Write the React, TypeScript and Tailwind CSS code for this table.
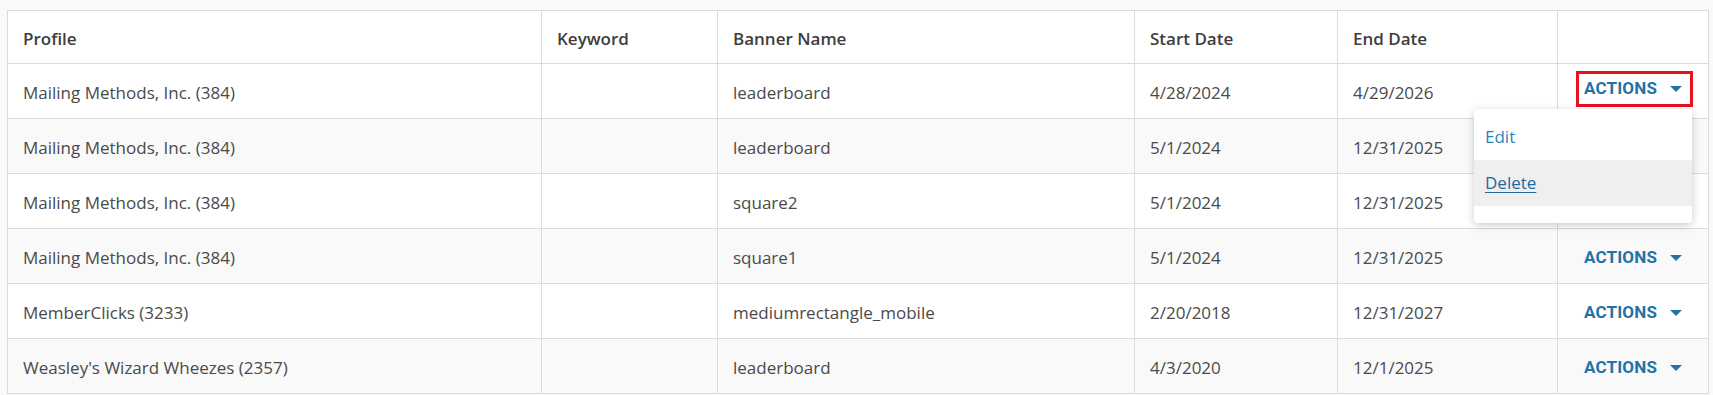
import React from "react";

type Row = {
    profile: string;
    keyword: string;
    banner: string;
    start: string;
    end: string;
};

const rows: Row[] = [
    { profile: "Mailing Methods, Inc. (384)", keyword: "", banner: "leaderboard", start: "4/28/2024", end: "4/29/2026" },
    { profile: "Mailing Methods, Inc. (384)", keyword: "", banner: "leaderboard", start: "5/1/2024", end: "12/31/2025" },
    { profile: "Mailing Methods, Inc. (384)", keyword: "", banner: "square2", start: "5/1/2024", end: "12/31/2025" },
    { profile: "Mailing Methods, Inc. (384)", keyword: "", banner: "square1", start: "5/1/2024", end: "12/31/2025" },
    { profile: "MemberClicks (3233)", keyword: "", banner: "mediumrectangle_mobile", start: "2/20/2018", end: "12/31/2027" },
    { profile: "Weasley's Wizard Wheezes (2357)", keyword: "", banner: "leaderboard", start: "4/3/2020", end: "12/1/2025" },
];

function Caret() {
    return (
        <svg width="12" height="6" viewBox="0 0 12 6" className="ml-[13px] shrink-0">
            <path d="M0 0 L12 0 L6 6 Z" fill="#2272a8" />
        </svg>
    );
}

function ActionsButton({ focused }: { focused?: boolean }) {
    return (
        <button
            className={
                focused
                    ? "flex items-center h-[36px] pl-[5px] pr-[8px] border-[3px] border-[#e4141f] text-[#2272a8] font-bold text-[17px] tracking-[0.01em]"
                    : "flex items-center h-[36px] pl-[5px] pr-[8px] border-[3px] border-transparent text-[#2272a8] font-bold text-[17px] tracking-[0.01em]"
            }
            style={{ fontFamily: "Roboto, 'Liberation Sans', sans-serif" }}
        >
            ACTIONS
            <Caret />
        </button>
    );
}

function Dropdown() {
    return (
        <div className="absolute left-[-102px] top-[38px] z-10 w-[218px] rounded-[4px] bg-white pt-[4px] pb-[17px] shadow-[0_2px_8px_rgba(0,0,0,0.22)]">
            <div className="h-[47px] flex items-center px-[11px] text-[#2a82bd]">Edit</div>
            <div className="h-[46px] flex items-center px-[11px] bg-[#efefef] text-[#1f679d] underline underline-offset-[3px]">Delete</div>
        </div>
    );
}

export default function App() {
    const cell = "border border-[#dcdcdc] px-[15px] align-middle";
    return (
        <div
            className="min-h-screen bg-[#f9f9f9] pt-[10px] pl-[7px]"
            style={{ fontFamily: "'Open Sans', 'Noto Sans', sans-serif" }}
        >
            <table className="table-fixed border-collapse w-[1701px] text-[17px] text-[#4a4a4a]">
                <colgroup>
                    <col className="w-[534px]" />
                    <col className="w-[176px]" />
                    <col className="w-[417px]" />
                    <col className="w-[203px]" />
                    <col className="w-[220px]" />
                    <col className="w-[151px]" />
                </colgroup>
                <thead>
                    <tr className="h-[53px] bg-white text-left text-[#3d3d3d]">
                        <th className={`${cell} font-semibold pt-[4px]`}>Profile</th>
                        <th className={`${cell} font-semibold pt-[4px]`}>Keyword</th>
                        <th className={`${cell} font-semibold pt-[4px]`}>Banner Name</th>
                        <th className={`${cell} font-semibold pt-[4px]`}>Start Date</th>
                        <th className={`${cell} font-semibold pt-[4px]`}>End Date</th>
                        <th className={cell}></th>
                    </tr>
                </thead>
                <tbody>
                    {rows.map((r, i) => (
                        <tr key={i} className={i % 2 === 0 ? "h-[55px] bg-white" : "h-[55px] bg-[#f9f9f9]"}>
                            <td className={`${cell} pt-[3px]`}>{r.profile}</td>
                            <td className={`${cell} pt-[3px]`}>{r.keyword}</td>
                            <td className={`${cell} pt-[3px]`}>{r.banner}</td>
                            <td className={`${cell} pt-[3px]`}>{r.start}</td>
                            <td className={`${cell} pt-[3px]`}>{r.end}</td>
                            <td className={`${cell} px-[18px]`}>
                                {i === 0 ? (
                                    <div className="relative mt-[-4px]">
                                        <ActionsButton focused />
                                        <Dropdown />
                                    </div>
                                ) : i >= 3 ? (
                                    <div className="mt-[3px]">
                                        <ActionsButton />
                                    </div>
                                ) : null}
                            </td>
                        </tr>
                    ))}
                </tbody>
            </table>
        </div>
    );
}
